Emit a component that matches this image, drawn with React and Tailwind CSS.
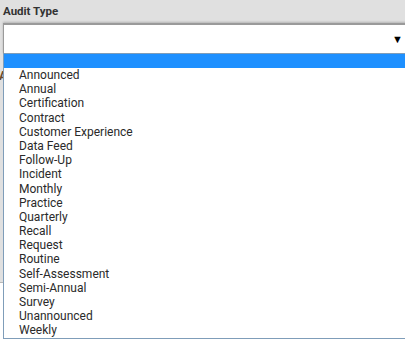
const options = [
    'Announced',
    'Annual',
    'Certification',
    'Contract',
    'Customer Experience',
    'Data Feed',
    'Follow-Up',
    'Incident',
    'Monthly',
    'Practice',
    'Quarterly',
    'Recall',
    'Request',
    'Routine',
    'Self-Assessment',
    'Semi-Annual',
    'Survey',
    'Unannounced',
    'Weekly'
];

const App = () => {
    return (
        <div className="relative w-[405px] h-[339px] overflow-hidden bg-white font-['Roboto',sans-serif] text-[#333]">
            <div className="h-[283px] bg-[#e0e0e0] border-b border-[#b8b8b8] pl-[3px] pt-[3px]">
                <div className="text-[11.5px] font-bold leading-[16px] text-[#333]">Audit Type</div>
                <div className="mt-[4px] h-[31px] w-[420px] bg-white border-t-2 border-l border-[#9a9a9a] shadow-[0_-1px_2px_rgba(0,0,0,0.2)] flex items-center justify-end pr-[20px]">
                    <span className="text-[11px] leading-none text-black">▼</span>
                </div>
                <div className="mt-[14px] -ml-[4px] text-[12px] font-bold leading-[16px] text-[#6b4a2a]">A</div>
                <div className="mt-[36px] h-[12px] w-[40px] bg-white border border-[#a8a8a8]"></div>
            </div>

            <div className="absolute left-[3px] top-[53px] w-[420px] h-[286px] bg-white border border-[#7f9db9]">
                <div className="h-[14px] bg-[#1e90ff]"></div>
                {options.map((opt) => (
                    <div key={opt} className="h-[14.2px] pl-[15px] text-[12px] leading-[14.2px] text-[#2a2a2a]">
                        {opt}
                    </div>
                ))}
            </div>
        </div>
    );
};

export default App;
